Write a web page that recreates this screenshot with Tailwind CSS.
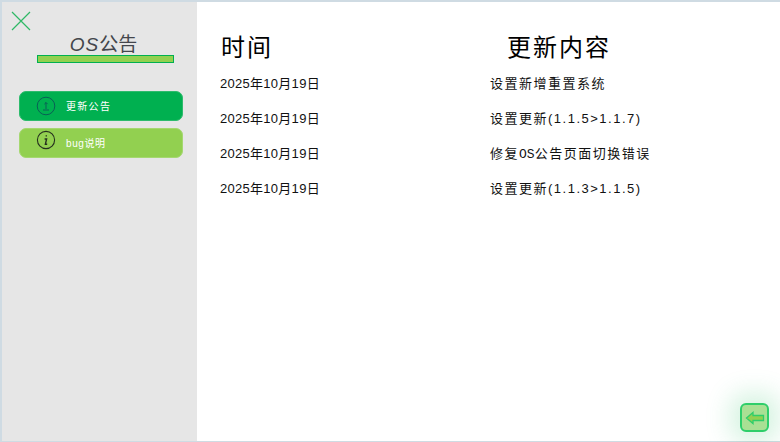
<!DOCTYPE html>
<html lang="zh-CN">
<head>
  <meta charset="UTF-8" />
  <title>OS公告</title>
  <script src="https://cdn.jsdelivr.net/npm/@tailwindcss/browser@4"></script>
</head>
<body class="w-[780px] h-[442px] overflow-hidden bg-white font-['Liberation_Sans','Noto_Sans_CJK_SC',sans-serif]">
  <div class="flex w-full h-full border-t-2 border-l-2 border-b border-[#cfdbe3]">
    <!-- sidebar -->
    <aside class="w-[195px] shrink-0 bg-[#e6e6e6] flex flex-col">
      <div class="h-[33px] pl-[8px] pt-[8px]">
        <svg width="22" height="22" viewBox="0 0 22 22" fill="none" stroke="#2fb866" stroke-width="1.2"><path d="M2 2 L20 20 M20 2 L2 20"/></svg>
      </div>
      <div class="text-center text-[19px] leading-[20px] text-[#44464c] pl-[8px]"><span class="italic tracking-[1px] font-['Liberation_Sans']">OS</span>公告</div>
      <div class="ml-[35px] w-[137px] h-[8px] bg-[#92d050] border border-[#00b050]"></div>
      <nav class="mt-[28px] ml-[17px] w-[164px] flex flex-col gap-[7px]">
        <div class="h-[30px] rounded-[7px] bg-[#00b050] flex items-center text-white text-[10px] border border-[#2dbb6c]">
          <svg class="ml-[16px] mt-[-1px]" width="20" height="20" viewBox="0 0 20 20" fill="none" stroke="#0a5f56" stroke-width="1"><circle cx="10" cy="10" r="8.8"/><path d="M10 13 V6.5 M8.4 8.1 L10 6.5 L11.6 8.1 M7 14 H13"/></svg>
          <span class="ml-[10px] tracking-[1.3px]">更新公告</span>
        </div>
        <div class="h-[30px] rounded-[7px] bg-[#92d050] flex items-center text-white text-[10px] border border-[#a5d870]">
          <svg class="ml-[16px] mt-[-6px]" width="20" height="20" viewBox="0 0 20 20" fill="none" stroke="#26301f" stroke-width="1.1"><circle cx="10" cy="10" r="8.6"/><path d="M10.3 5.2 V6.6 M8.6 9 H10.6 L9.4 14.2 H11.2" stroke-width="1.4"/></svg>
          <span class="ml-[10px] tracking-[0.6px]">bug说明</span>
        </div>
      </nav>
    </aside>
    <!-- content -->
    <main class="relative flex-1 pl-[23px] text-black">
      <div class="grid grid-cols-[270px_1fr] pt-[28px]">
        <div class="text-[24px] leading-[32px] tracking-[2px] pl-[1px] font-['Noto_Sans_CJK_SC']">时间</div>
        <div class="text-[24px] leading-[32px] tracking-[2px] pl-[17px] font-['Noto_Sans_CJK_SC']">更新内容</div>
      </div>
      <div class="grid grid-cols-[270px_1fr] auto-rows-[35px] mt-[4px] text-[13px] leading-[35px] text-[#111]">
        <div class="tracking-[0.28px]">2025年10月19日</div><div class="tracking-[1.5px]">设置新增重置系统</div>
        <div class="tracking-[0.28px]">2025年10月19日</div><div class="tracking-[1.5px]">设置更新(1.1.5&gt;1.1.7)</div>
        <div class="tracking-[0.28px]">2025年10月19日</div><div class="tracking-[1.5px]">修复<span class="font-['Liberation_Mono'] tracking-[0px]">OS</span>公告页面切换错误</div>
        <div class="tracking-[0.28px]">2025年10月19日</div><div class="tracking-[1.5px]">设置更新(1.1.3&gt;1.1.5)</div>
      </div>
      <!-- back button -->
      <div class="absolute right-[11px] bottom-[9px] w-[29px] h-[29px] rounded-[6px] bg-[#a9e094] border-2 border-[#2fce6a] shadow-[0_0_24px_10px_rgba(70,200,120,0.22)] flex items-center justify-center">
        <svg width="20" height="14" viewBox="0 0 20 14"><path d="M1.5 7 L8 1.5 V4.5 H18.5 V9.5 H8 V12.5 Z" fill="#92d050" stroke="#2fce6a" stroke-width="1.3"/></svg>
      </div>
    </main>
  </div>
</body>
</html>
